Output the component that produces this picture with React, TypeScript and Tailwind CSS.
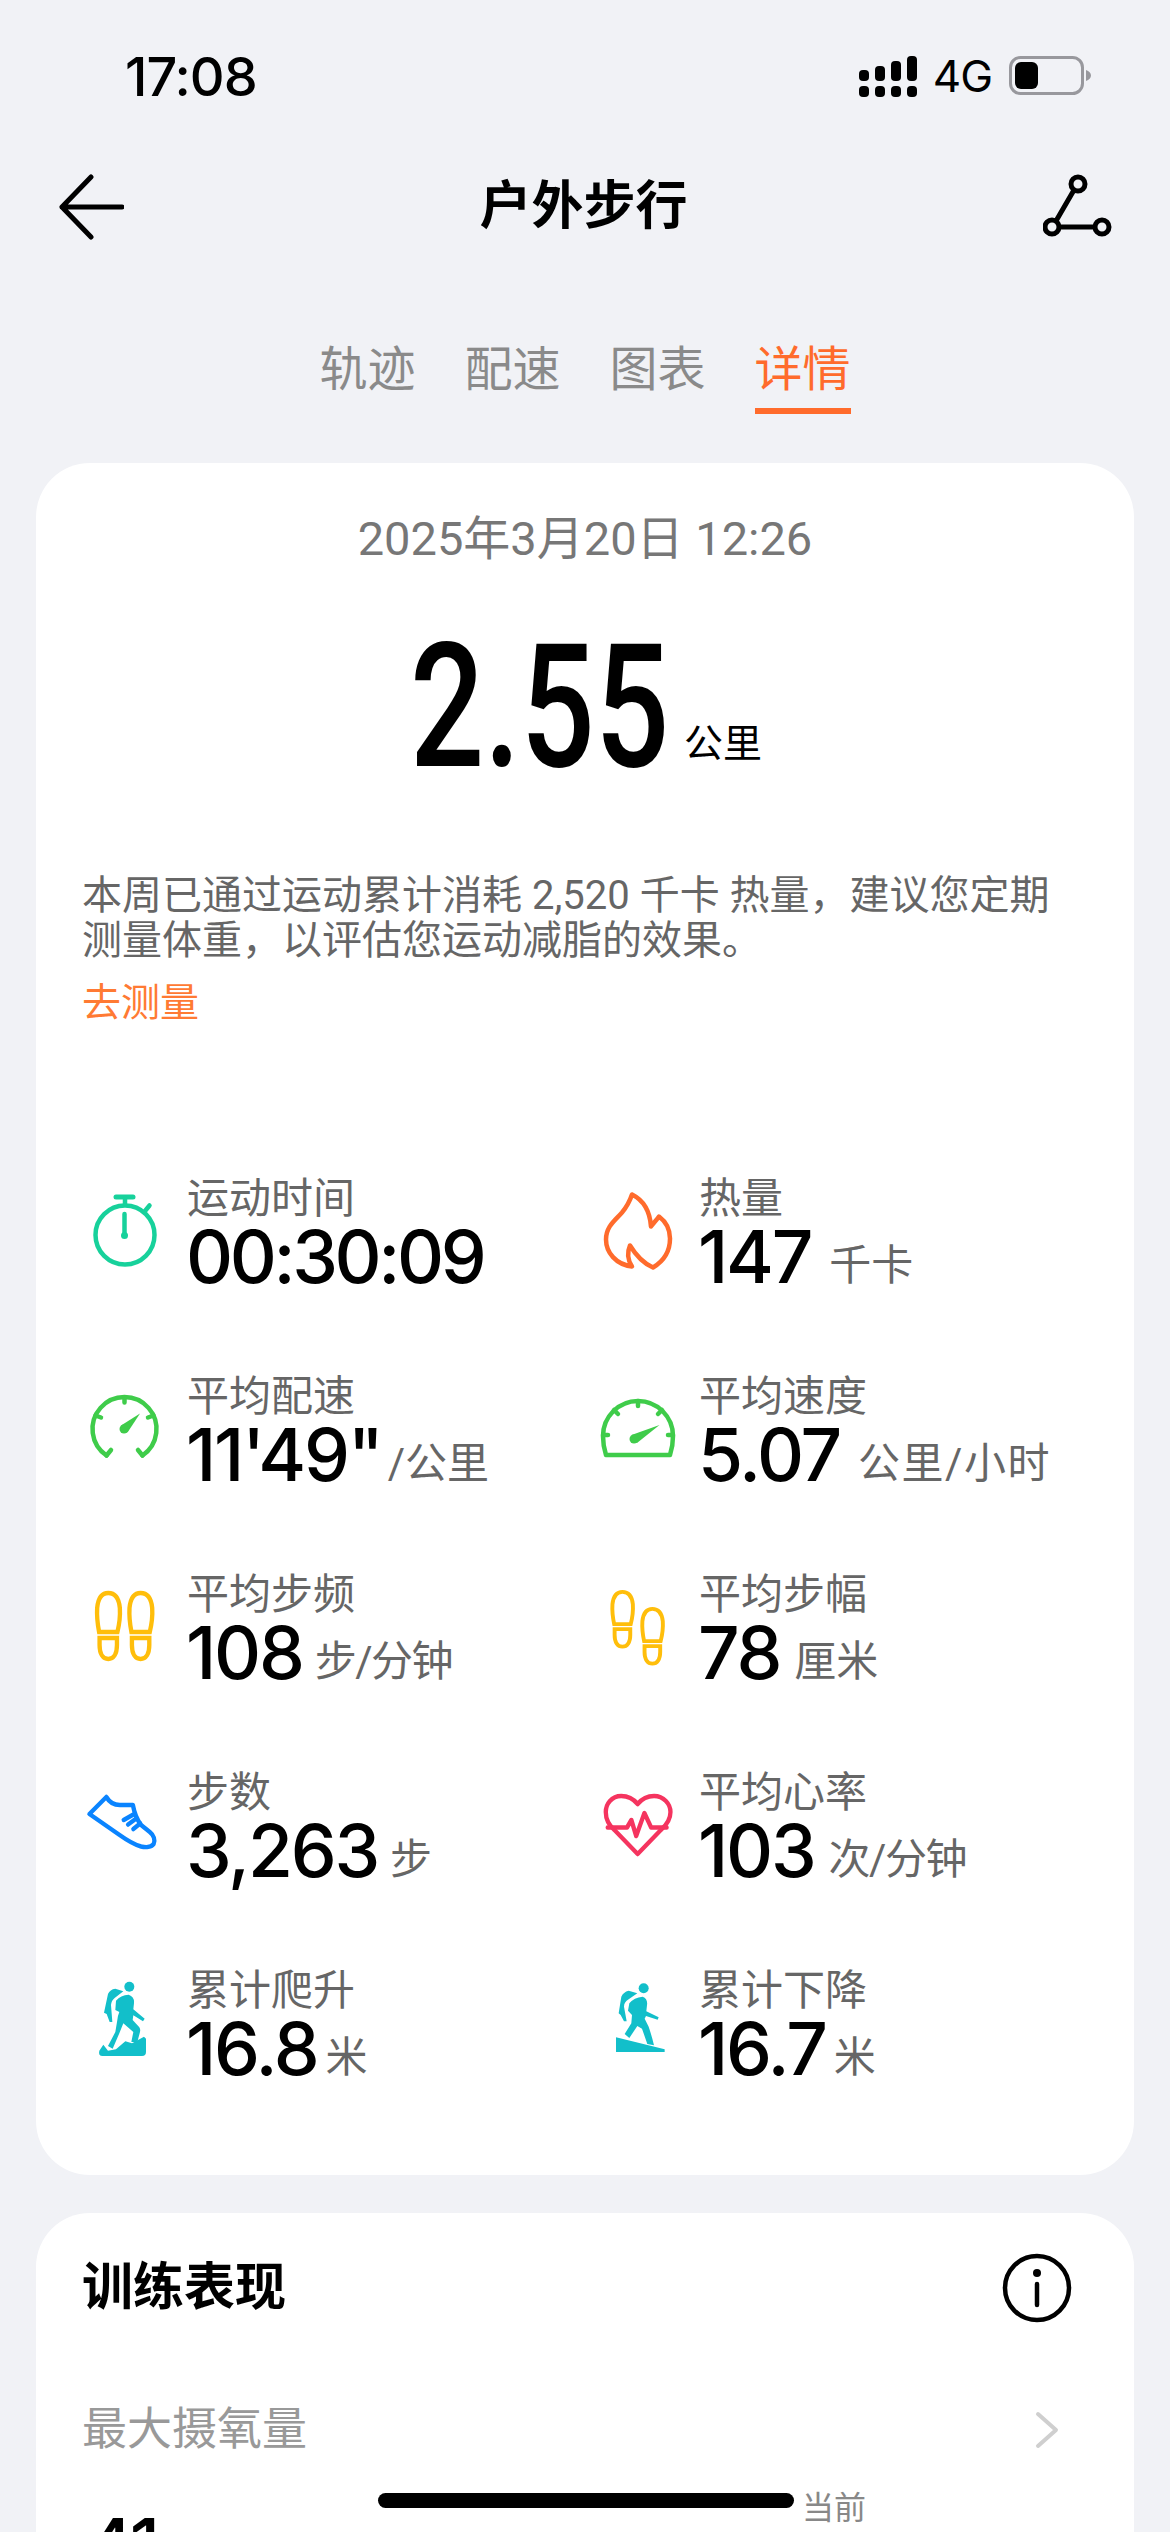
const sans = "font-['Roboto','Liberation_Sans','Noto_Sans_CJK_SC',sans-serif]";
const digits = "font-['Inter','Liberation_Sans','Noto_Sans_CJK_SC',sans-serif]";
const narrow = "translate(-0.7 0) scale(0.9655 1)";
const hikerBox = "translate(0 4) scale(0.3333)";

function Foot({ x, y, sx = 1, sy = 1 }: { x: number; y: number; sx?: number; sy?: number }) {
  return (
    <g transform={`translate(${x} ${y}) scale(${sx} ${sy})`}>
      <path d="M3 40 C1 30 0.5 24 1 16 C2 6 6 1 12.5 1 C19 1 23.5 6 24.5 16 C25 24 24.5 30 22 40 Z" />
      <path d="M3.5 46 H21.5 V53 C21.5 62 18 67 12.5 67 C7 67 3.5 62 3.5 53 Z" />
    </g>
  );
}

function Stopwatch() {
  return (
    <svg width="90" height="120" viewBox="0 3 90 120" fill="none" stroke="#17d19b" strokeWidth="4.5" strokeLinecap="round">
      <circle cx="45" cy="64" r="29.5" />
      <path d="M36 26 H53" strokeWidth="5" />
      <path d="M45 27 V33" />
      <path d="M65 40 L69.5 34.5" />
      <path d="M44.5 43 V63" />
      <circle cx="44.5" cy="64.5" r="3.5" fill="#17d19b" stroke="none" />
    </svg>
  );
}

function Flame() {
  return (
    <svg width="90" height="120" viewBox="0 3.5 90 120" fill="none" stroke="#ff6b2c" strokeWidth="4.5" strokeLinejoin="round">
      <path d="M40 24 C52 30 58 42 59 56 C62 52 65 49 67 46 C75 52 78 60 78 68 C78 82 71 91 61 97 C52 93 44 85 38 75 C35 82 36 90 40 96 C24 94 14 82 14 69 C14 56 23 50 30 42 C35 36 38 30 40 24 Z" />
    </svg>
  );
}

function GaugeArc() {
  return (
    <svg width="90" height="120" viewBox="0 9.5 90 120" fill="none" stroke="#3fcc4a" strokeWidth="4.5" strokeLinecap="round" strokeLinejoin="round">
      <path d="M26.5 93 A32 32 0 1 1 62.5 93" />
      <path d="M26.5 93 L31 87.5 M62.5 93 L58 87.5 M44.5 35 V40 M15.5 53 L21 55 M73.5 53 L68 55" />
      <path d="M60 51 L47.5 70 L41 63 Z" fill="#3fcc4a" stroke="none" />
      <circle cx="44" cy="66.5" r="4.5" fill="#3fcc4a" stroke="none" />
    </svg>
  );
}

function GaugeDome() {
  return (
    <svg width="90" height="120" viewBox="0 9 90 120" fill="none" stroke="#3fcc4a" strokeWidth="4.5" strokeLinecap="round" strokeLinejoin="round">
      <path d="M14 92 H78 C80 86 81 80 81 73 A35 35 0 0 0 11 73 C11 80 12 86 14 92 Z" />
      <path d="M46 38 V43 M22 47 L26 51 M70 47 L66 51 M11 72 H16 M81 72 H76" />
      <path d="M67.5 62 L45 80 L39.5 72 Z" fill="#3fcc4a" stroke="none" />
      <circle cx="42" cy="76" r="4.5" fill="#3fcc4a" stroke="none" />
    </svg>
  );
}

function FeetEven() {
  return (
    <svg width="90" height="120" viewBox="0 0 90 120" fill="none" stroke="#ffbe0b" strokeWidth="4.5">
      <g transform={narrow}>
        <Foot x={17.5} y={22} />
        <Foot x={51} y={22} />
      </g>
    </svg>
  );
}

function FeetOffset() {
  return (
    <svg width="90" height="120" viewBox="0 0 90 120" fill="none" stroke="#ffbe0b" strokeWidth="4.5">
      <g transform={narrow}>
        <Foot x={21} y={21} sx={0.9} sy={0.83} />
        <Foot x={52} y={38} sx={0.9} sy={0.83} />
      </g>
    </svg>
  );
}

function Shoe() {
  return (
    <svg width="90" height="120" viewBox="0 0 90 120" fill="none" stroke="#0a84ff" strokeWidth="4.5" strokeLinecap="round" strokeLinejoin="round">
      <g transform={narrow}>
        <path d="M10.5 46 L28 29 C31 34 36 37 42 37 C47 37 52 37 55.5 37 C57 45 60 52 64 57 L73 64 C77 67 79 72 77 76 C75 79 69 79.5 64 78.5 C56 76.5 49 72 41 66.5 L10.5 46 Z" />
        <path d="M46 52 L56 46.5 M50.5 56.5 L59 50.5 M56 61 L63 55.5" />
      </g>
    </svg>
  );
}

function Heart() {
  return (
    <svg width="90" height="120" viewBox="0 0 90 120" fill="none" stroke="#f5345f" strokeWidth="4.5" strokeLinecap="round" strokeLinejoin="round">
      <g transform={narrow}>
        <path d="M48 36 C42 29 36 28 31 28 C21 28 15 36 15 44 C15 51 18 57 24 62 L48 86 L72 62 C78 57 82 51 82 44 C82 36 75 28 65 28 C60 28 54 29 48 36 Z" />
        <path d="M17 59.5 H37 L41.5 52 L46.5 68 L55 45 L62 59.5 H78" />
      </g>
    </svg>
  );
}

function HikerUp() {
  return (
    <svg width="90" height="120" viewBox="0 0 90 120" fill="#12bfca">
      <g transform={hikerBox}>
        <circle cx="148" cy="50" r="15" />
        <path d="M72 128 L84 72 Q90 58 106 56 L130 64 L104 84 Q94 92 93 105 L97 156 L89 156 L80 132 Z" />
        <path d="M108 92 Q122 76 146 74 Q164 80 162 100 L160 118 L194 146 L189 154 L160 136 L158 150 L178 172 Q182 178 180 186 L172 216 L154 216 L160 186 L130 160 L118 190 L98 236 L84 228 L106 186 L112 150 Q112 140 118 126 L106 120 Z" />
        <path d="M58 242 L70 224 L84 242 L108 238 L136 214 L156 220 L192 200 L198 206 V246 Q198 258 186 258 H68 Q54 258 58 242 Z" />
      </g>
    </svg>
  );
}

function HikerDown() {
  return (
    <svg width="90" height="120" viewBox="0 0 90 120" fill="#12bfca">
      <g transform={hikerBox}>
        <circle cx="155" cy="55" r="15" />
        <path d="M80 130 L88 80 Q94 66 110 62 L136 70 L110 88 Q96 96 96 110 L104 154 L96 154 L86 135 Z" />
        <path d="M112 100 Q126 82 152 80 Q168 86 165 106 L163 124 L200 142 L197 149 L162 138 L158 146 L170 170 Q180 200 186 226 L166 222 L150 176 L136 168 L112 204 L98 192 L118 160 L120 135 L108 122 Z" />
        <path d="M72 202 L218 238 V246 H72 Z" />
      </g>
    </svg>
  );
}

function Stat({ icon, label, value, unit, gap, tracking = "tracking-[-2.2px]" }: { icon: React.ReactNode; label: string; value: string; unit: string; gap: string; tracking?: string }) {
  return (
    <div className="flex h-[198px] items-start">
      <div className="w-[90px] shrink-0">{icon}</div>
      <div className="ml-[16px]">
        <div className="ml-[1px] text-[42px] leading-[50px] text-[#666]">{label}</div>
        <div className="flex h-[66px] items-baseline whitespace-nowrap leading-[66px]">
          <span className={`text-[73px] font-[550] text-black ${tracking} ${digits}`}>{value}</span>
          <span className={`relative -top-[3px] text-[42px] text-[#666] ${gap}`}>{unit}</span>
        </div>
      </div>
    </div>
  );
}

export default function App() {
  return (
    <div className={`relative h-[2532px] w-[1170px] overflow-hidden bg-[#f1f2f6] ${sans}`}>
      {/* status bar */}
      <div className="flex h-[154px] items-start justify-between pt-[52px] pl-[125px] pr-[78px]">
        <span className={`text-[54px] leading-[50px] font-[550] tracking-[-1px] text-black ${digits}`}>17:08</span>
        <div className="mt-[3px] flex items-center">
          <svg width="58" height="41" viewBox="0 0 58 41" fill="#000">
            <rect x="0" y="14" width="10" height="11" rx="4" />
            <rect x="16" y="10" width="10" height="15" rx="4" />
            <rect x="32" y="5" width="10" height="20" rx="4" />
            <rect x="48" y="0" width="10" height="25" rx="4" />
            <rect x="0" y="30" width="10" height="11" rx="4" />
            <rect x="16" y="30" width="10" height="11" rx="4" />
            <rect x="32" y="30" width="10" height="11" rx="4" />
            <rect x="48" y="30" width="10" height="11" rx="4" />
          </svg>
          <span className={`ml-[16px] text-[44px] leading-[42px] tracking-[-1px] text-black ${digits}`}>4G</span>
          <svg className="ml-[17px]" width="83" height="40" viewBox="0 0 83 40" fill="none">
            <rect x="1.5" y="1.5" width="72" height="36" rx="10" stroke="#98989d" strokeWidth="3" />
            <rect x="6" y="6" width="23" height="27" rx="6" fill="#000" />
            <path d="M77 14 C80 15 82 17 82 19.5 C82 22 80 24 77 25 Z" fill="#98989d" />
          </svg>
        </div>
      </div>

      {/* title row */}
      <div className="flex h-[106px] items-center justify-between pl-[58px] pr-[57px]">
        <svg width="66" height="66" viewBox="0 0 66 66" fill="none" stroke="#000" strokeWidth="5" strokeLinecap="round" strokeLinejoin="round">
          <path d="M33 3 L4 33 L33 63 M4 33 H64" />
        </svg>
        <span className="text-[52px] font-bold text-black">户外步行</span>
        <svg width="70" height="66" viewBox="0 0 70 66" fill="none" stroke="#000" strokeWidth="5">
          <circle cx="35" cy="10" r="7" />
          <circle cx="9" cy="53" r="7" />
          <circle cx="59" cy="53" r="7" />
          <path d="M31 16 L13 47 M16 53 H52" />
        </svg>
      </div>

      {/* tabs */}
      <div className="mt-[80px] flex justify-center gap-[49px] text-[48px] leading-[60px] text-[#8a8a8a]">
        <span className="border-b-[6px] border-transparent pb-[8px]">轨迹</span>
        <span className="border-b-[6px] border-transparent pb-[8px]">配速</span>
        <span className="border-b-[6px] border-transparent pb-[8px]">图表</span>
        <span className="border-b-[6px] border-[#ff6b2c] pb-[8px] text-[#ff6b2c]">详情</span>
      </div>

      {/* summary card */}
      <div className="mx-[36px] mt-[49px] h-[1712px] rounded-[54px] bg-white">
        <div className="pt-[50px] text-center text-[47px] leading-[52px] text-[#777]">2025年3月20日 12:26</div>
        <div className="mt-[57px] flex h-[170px] items-end pl-[374px]">
          <span className="w-[254px] origin-left scale-x-[0.76] text-[172px] leading-[170px] font-medium text-black">2.55</span>
          <span className="ml-[20px] mb-[26px] text-[39px] leading-[44px] text-black">公里</span>
        </div>
        <p className="mt-[81px] px-[46px] text-[40px] leading-[45px] text-[#666]">
          本周已通过运动累计消耗 2,520 千卡 热量，建议您定期测量体重，以评估您运动减脂的效果。
        </p>
        <div className="mt-[17px] px-[46px] text-[39px] leading-[46px] text-[#ff7a33]">去测量</div>
        <div className="mt-[148px] grid grid-cols-[512px_1fr] pl-[44px]">
          <Stat icon={<Stopwatch />} label="运动时间" value="00:30:09" unit="" gap="" tracking="tracking-[-3.4px]" />
          <Stat icon={<Flame />} label="热量" value="147" unit="千卡" gap="ml-[18px]" />
          <Stat icon={<GaugeArc />} label="平均配速" value={"11'49\""} unit="/公里" gap="ml-[6px]" />
          <Stat icon={<GaugeDome />} label="平均速度" value="5.07" unit="公里/小时" gap="ml-[18px] tracking-[1.5px]" />
          <Stat icon={<FeetEven />} label="平均步频" value="108" unit="步/分钟" gap="ml-[12px] tracking-[-1.5px]" />
          <Stat icon={<FeetOffset />} label="平均步幅" value="78" unit="厘米" gap="ml-[14px]" />
          <Stat icon={<Shoe />} label="步数" value="3,263" unit="步" gap="ml-[12px]" />
          <Stat icon={<Heart />} label="平均心率" value="103" unit="次/分钟" gap="ml-[14px] tracking-[-1.5px]" />
          <Stat icon={<HikerUp />} label="累计爬升" value="16.8" unit="米" gap="ml-[8px]" />
          <Stat icon={<HikerDown />} label="累计下降" value="16.7" unit="米" gap="ml-[8px]" />
        </div>
      </div>

      {/* training card */}
      <div className="mx-[36px] mt-[38px] h-[400px] rounded-[54px] bg-white">
        <div className="flex items-center justify-between pt-[40px] pl-[46px] pr-[62px]">
          <span className="text-[51px] leading-[68px] font-bold text-black">训练表现</span>
          <svg width="70" height="70" viewBox="0 0 70 70" fill="none" stroke="#000" strokeWidth="4.5">
            <circle cx="35" cy="35" r="32" />
            <path d="M35 31 V52" strokeLinecap="round" />
            <circle cx="35" cy="20" r="4" fill="#000" stroke="none" />
          </svg>
        </div>
        <div className="mt-[78px] flex items-center justify-between pl-[46px] pr-[75px]">
          <span className="text-[45px] leading-[58px] text-[#999]">最大摄氧量</span>
          <svg width="24" height="38" viewBox="0 0 24 38" fill="none" stroke="#cfcfcf" strokeWidth="4" strokeLinecap="round" strokeLinejoin="round">
            <path d="M3 3 L21 19 L3 35" />
          </svg>
        </div>
      </div>

      {/* content under the home bar */}
      <div className="absolute left-[86px] top-[2510px] flex items-baseline whitespace-nowrap leading-[70px]">
        <span className={`text-[73px] font-[550] tracking-[-2.2px] text-black ${digits}`}>41</span>
        <span className="relative -top-[9px] ml-[26px] text-[34px] text-[#666]">毫升/公斤/分钟</span>
      </div>
      <span className="absolute left-[802px] top-[2488px] text-[32px] leading-[40px] text-[#888]">当前</span>
      <div className="absolute left-[378px] top-[2493px] h-[15px] w-[416px] rounded-full bg-black" />
    </div>
  );
}
